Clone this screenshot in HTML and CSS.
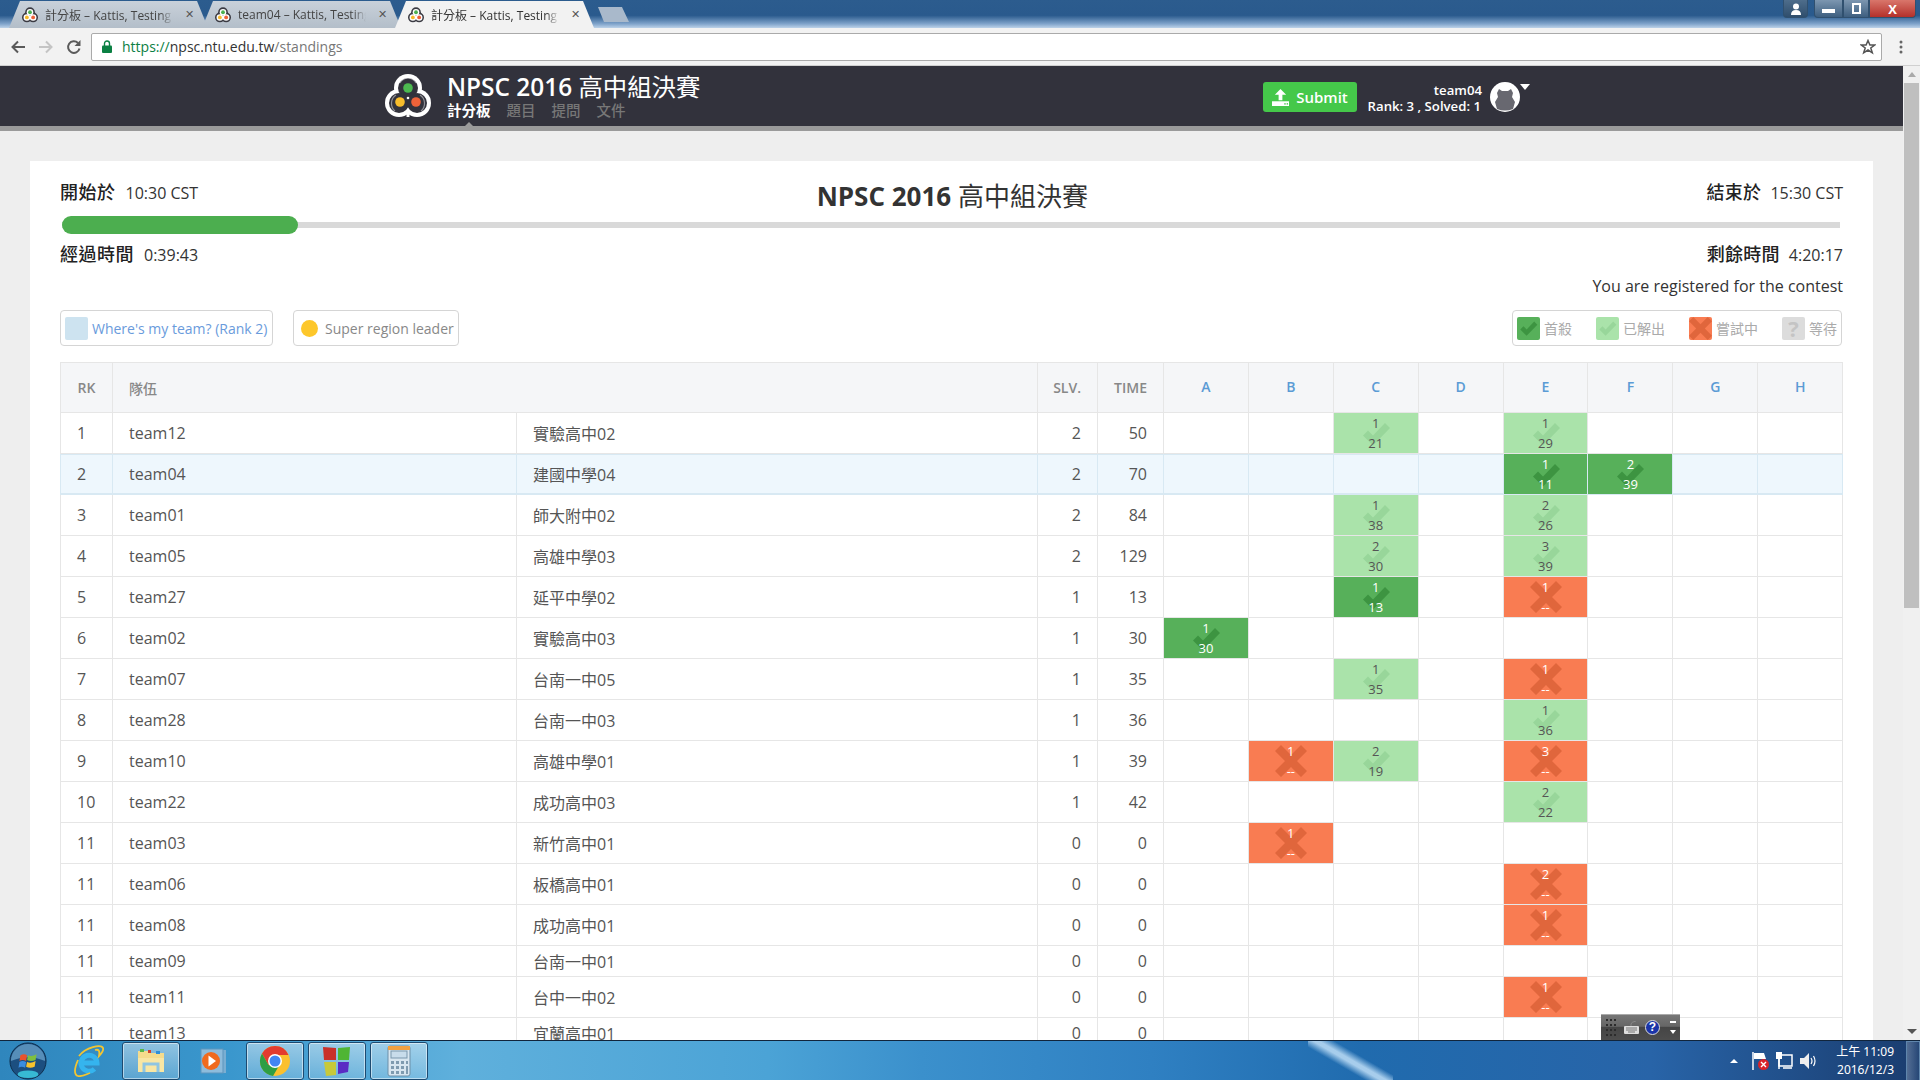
FILE: index.html
```html
<!DOCTYPE html>
<html lang="zh-Hant">
<head>
<meta charset="utf-8">
<title>計分板 – Kattis, Testing Contest</title>
<link rel="stylesheet" href="styles.css">
</head>
<body>
<svg class="defs" width="0" height="0">
  <symbol id="chk" viewBox="0 0 30 24"><path d="M2 13.5 L7 8.5 L12 13.5 L24 1 L29 6 L12 23.5 Z"/></symbol>
  <symbol id="cross" viewBox="0 0 32 32"><path d="M6 0 L16 10 L26 0 L32 6 L22 16 L32 26 L26 32 L16 22 L6 32 L0 26 L10 16 L0 6 Z"/></symbol>
  <symbol id="fav" viewBox="0 0 46 44"><g fill="#3a3a42"><circle cx="23" cy="14" r="14"/><circle cx="14" cy="29" r="14"/><circle cx="32" cy="29" r="14"/></g><g fill="#fff"><circle cx="23" cy="14" r="9.5"/><circle cx="14" cy="29" r="9.5"/><circle cx="32" cy="29" r="9.5"/></g><circle cx="23" cy="14" r="5.5" fill="#4cb050"/><circle cx="14" cy="29" r="5.5" fill="#f6b92b"/><circle cx="32" cy="29" r="5.5" fill="#ee6239"/></symbol>
</svg>
<div class="app">
  <div class="tabstrip">
    <div class="tab"><svg class="fav"><use href="#fav"/></svg><span class="tab-t">計分板 – Kattis, Testing</span><span class="tab-x">✕</span></div>
    <div class="tab"><svg class="fav"><use href="#fav"/></svg><span class="tab-t">team04 – Kattis, Testing</span><span class="tab-x">✕</span></div>
    <div class="tab active"><svg class="fav"><use href="#fav"/></svg><span class="tab-t">計分板 – Kattis, Testing</span><span class="tab-x">✕</span></div>
    <div class="newtab"></div>
    <div class="winbtns">
      <div class="wb wb-user"><svg width="12" height="12" viewBox="0 0 12 12"><circle cx="6" cy="3.5" r="3" fill="#fff"/><path d="M1 12 Q1 7 6 7 Q11 7 11 12Z" fill="#fff"/></svg></div>
      <div class="wb wb-min"><i></i></div>
      <div class="wb wb-max"><b></b></div>
      <div class="wb wb-close">X</div>
    </div>
  </div>
  <div class="toolbar">
    <svg class="tb-ic" viewBox="0 0 16 16"><path d="M15 8H3M8 2.5 2.5 8 8 13.5" fill="none" stroke="#5a5a5a" stroke-width="2"/></svg>
    <svg class="tb-ic" viewBox="0 0 16 16"><path d="M1 8H13M8 2.5 13.5 8 8 13.5" fill="none" stroke="#c4c4c4" stroke-width="2"/></svg>
    <svg class="tb-ic" viewBox="0 0 16 16"><path d="M13.5 9.5A5.8 5.8 0 1 1 12 4" fill="none" stroke="#5a5a5a" stroke-width="2"/><path d="M14.5 1V7H8.5Z" fill="#5a5a5a"/></svg>
    <div class="omni">
      <svg class="lock" viewBox="0 0 10 13"><path d="M2.5 6V3.5a2.5 2.5 0 0 1 5 0V6" fill="none" stroke="#0b8043" stroke-width="1.4"/><rect y="5.5" width="10" height="7.5" rx="1" fill="#0b8043"/></svg>
      <span class="url"><span class="u-s">https://</span><span class="u-h">npsc.ntu.edu.tw</span><span class="u-p">/standings</span></span>
      <svg class="star" viewBox="0 0 16 16"><path d="M8 1.5 9.9 6h4.8l-3.9 3 1.5 4.8L8 11l-4.3 2.8L5.2 9 1.3 6h4.8Z" fill="none" stroke="#555" stroke-width="1.5"/></svg>
    </div>
    <svg class="dots" viewBox="0 0 4 16"><circle cx="2" cy="3" r="1.5"/><circle cx="2" cy="8" r="1.5"/><circle cx="2" cy="13" r="1.5"/></svg>
  </div>

  <div class="viewport">
    <div class="page">
      <header class="hdr">
        <svg class="logo" viewBox="0 0 46 44">
          <g fill="#fff"><circle cx="23" cy="14" r="14"/><circle cx="14" cy="29" r="14"/><circle cx="32" cy="29" r="14"/></g>
          <g fill="#32323c"><circle cx="23" cy="14" r="10"/><circle cx="14" cy="29" r="10"/><circle cx="32" cy="29" r="10"/></g>
          <path d="M23 36V43" stroke="#fff" stroke-width="3"/>
          <path d="M11 21A10 10 0 0 0 10 37M35 21A10 10 0 0 1 36 37M15 9A9 9 0 0 1 31 9" fill="none" stroke="#fff" stroke-width="1.2" opacity=".45"/>
          <circle cx="23" cy="14" r="4.8" fill="#4cb950"/><circle cx="15" cy="28" r="4.8" fill="#f8bd2c"/><circle cx="31" cy="28" r="4.8" fill="#ee6239"/><circle cx="23" cy="24" r="1.3" fill="#fff"/>
        </svg>
        <div class="hdr-titles">
          <div class="hdr-title">NPSC 2016 <span class="cjk">高中組決賽</span></div>
          <nav class="nav"><span class="nav-i on">計分板</span><span class="nav-i">題目</span><span class="nav-i">提問</span><span class="nav-i">文件</span></nav>
        </div>
        <div class="spacer"></div>
        <div class="submit">
          <svg class="sub-ic" viewBox="0 0 18 18"><path d="M9 0 15 6H11V12H7V6H3Z" fill="#fff"/><path d="M0 13H18V18H0Z" fill="#fff"/><rect x="13" y="15" width="1.5" height="1.5" fill="#45c84a"/><rect x="15.5" y="15" width="1.5" height="1.5" fill="#45c84a"/></svg>
          <span>Submit</span>
        </div>
        <div class="user"><div>team04</div><div>Rank: 3 , Solved: 1</div></div>
        <svg class="avatar" viewBox="0 0 30 30"><circle cx="15" cy="15" r="15" fill="#fff"/><path d="M9 7 12 9H18L21 7 23 11 22 15 25 20 23 27Q15 30 7 27L5 20 8 15 7 11Z" fill="#686870"/></svg>
        <div class="caret"></div>
      </header>
      <div class="band"></div>
      <main class="wrap">
        <section class="card">
          <div class="info first">
            <div><span class="lbl">開始於</span><span class="val">10:30 CST</span></div>
            <h1 class="ctitle">NPSC 2016 <span class="cjk">高中組決賽</span></h1>
            <div class="right"><span class="lbl">結束於</span><span class="val">15:30 CST</span></div>
          </div>
          <div class="track"><div class="fill"></div></div>
          <div class="info second">
            <div><span class="lbl">經過時間</span><span class="val">0:39:43</span></div>
            <div class="right"><span class="lbl">剩餘時間</span><span class="val">4:20:17</span></div>
          </div>
          <div class="reg">You are registered for the contest</div>
          <div class="tools">
            <div class="pill mine"><span class="sw-mine"></span><span>Where's my team? (Rank 2)</span></div>
            <div class="pill leader"><span class="sw-dot"></span><span>Super region leader</span></div>
            <div class="spacer"></div>
            <div class="legend">
              <div class="lg"><span class="sw first-s"><svg class="sw-ic"><use href="#chk"/></svg></span>首殺</div>
              <div class="lg"><span class="sw ok-s"><svg class="sw-ic"><use href="#chk"/></svg></span>已解出</div>
              <div class="lg"><span class="sw try-s"><svg class="sw-ic"><use href="#cross"/></svg></span>嘗試中</div>
              <div class="lg"><span class="sw wait-s">?</span>等待</div>
            </div>
          </div>
          <table class="board">
            <colgroup><col class="c-rk"><col class="c-team"><col class="c-sch"><col class="c-slv"><col class="c-time"><col class="c-p"><col class="c-p"><col class="c-p"><col class="c-p"><col class="c-p"><col class="c-p"><col class="c-p"><col class="c-p"></colgroup>
            <thead><tr><th class="ctr">RK</th><th class="lft" colspan="2">隊伍</th><th class="rgt">SLV.</th><th class="rgt">TIME</th><th class="pr">A</th><th class="pr">B</th><th class="pr">C</th><th class="pr">D</th><th class="pr">E</th><th class="pr">F</th><th class="pr">G</th><th class="pr">H</th></tr></thead>
            <tbody>
              <tr><td class="rk">1</td><td class="tm">team12</td><td class="tm">實驗高中02</td><td class="num">2</td><td class="num">50</td><td class="p"></td><td class="p"></td><td class="p"><div class="cell ok"><svg class="mk"><use href="#chk"/></svg><div class="ct"><span>1</span><span>21</span></div></div></td><td class="p"></td><td class="p"><div class="cell ok"><svg class="mk"><use href="#chk"/></svg><div class="ct"><span>1</span><span>29</span></div></div></td><td class="p"></td><td class="p"></td><td class="p"></td></tr>
              <tr class="me"><td class="rk">2</td><td class="tm">team04</td><td class="tm">建國中學04</td><td class="num">2</td><td class="num">70</td><td class="p"></td><td class="p"></td><td class="p"></td><td class="p"></td><td class="p"><div class="cell fst"><svg class="mk"><use href="#chk"/></svg><div class="ct"><span>1</span><span>11</span></div></div></td><td class="p"><div class="cell fst"><svg class="mk"><use href="#chk"/></svg><div class="ct"><span>2</span><span>39</span></div></div></td><td class="p"></td><td class="p"></td></tr>
              <tr><td class="rk">3</td><td class="tm">team01</td><td class="tm">師大附中02</td><td class="num">2</td><td class="num">84</td><td class="p"></td><td class="p"></td><td class="p"><div class="cell ok"><svg class="mk"><use href="#chk"/></svg><div class="ct"><span>1</span><span>38</span></div></div></td><td class="p"></td><td class="p"><div class="cell ok"><svg class="mk"><use href="#chk"/></svg><div class="ct"><span>2</span><span>26</span></div></div></td><td class="p"></td><td class="p"></td><td class="p"></td></tr>
              <tr><td class="rk">4</td><td class="tm">team05</td><td class="tm">高雄中學03</td><td class="num">2</td><td class="num">129</td><td class="p"></td><td class="p"></td><td class="p"><div class="cell ok"><svg class="mk"><use href="#chk"/></svg><div class="ct"><span>2</span><span>30</span></div></div></td><td class="p"></td><td class="p"><div class="cell ok"><svg class="mk"><use href="#chk"/></svg><div class="ct"><span>3</span><span>39</span></div></div></td><td class="p"></td><td class="p"></td><td class="p"></td></tr>
              <tr><td class="rk">5</td><td class="tm">team27</td><td class="tm">延平中學02</td><td class="num">1</td><td class="num">13</td><td class="p"></td><td class="p"></td><td class="p"><div class="cell fst"><svg class="mk"><use href="#chk"/></svg><div class="ct"><span>1</span><span>13</span></div></div></td><td class="p"></td><td class="p"><div class="cell tr"><svg class="mk mx"><use href="#cross"/></svg><div class="ct"><span>1</span><span>--</span></div></div></td><td class="p"></td><td class="p"></td><td class="p"></td></tr>
              <tr><td class="rk">6</td><td class="tm">team02</td><td class="tm">實驗高中03</td><td class="num">1</td><td class="num">30</td><td class="p"><div class="cell fst"><svg class="mk"><use href="#chk"/></svg><div class="ct"><span>1</span><span>30</span></div></div></td><td class="p"></td><td class="p"></td><td class="p"></td><td class="p"></td><td class="p"></td><td class="p"></td><td class="p"></td></tr>
              <tr><td class="rk">7</td><td class="tm">team07</td><td class="tm">台南一中05</td><td class="num">1</td><td class="num">35</td><td class="p"></td><td class="p"></td><td class="p"><div class="cell ok"><svg class="mk"><use href="#chk"/></svg><div class="ct"><span>1</span><span>35</span></div></div></td><td class="p"></td><td class="p"><div class="cell tr"><svg class="mk mx"><use href="#cross"/></svg><div class="ct"><span>1</span><span>--</span></div></div></td><td class="p"></td><td class="p"></td><td class="p"></td></tr>
              <tr><td class="rk">8</td><td class="tm">team28</td><td class="tm">台南一中03</td><td class="num">1</td><td class="num">36</td><td class="p"></td><td class="p"></td><td class="p"></td><td class="p"></td><td class="p"><div class="cell ok"><svg class="mk"><use href="#chk"/></svg><div class="ct"><span>1</span><span>36</span></div></div></td><td class="p"></td><td class="p"></td><td class="p"></td></tr>
              <tr><td class="rk">9</td><td class="tm">team10</td><td class="tm">高雄中學01</td><td class="num">1</td><td class="num">39</td><td class="p"></td><td class="p"><div class="cell tr"><svg class="mk mx"><use href="#cross"/></svg><div class="ct"><span>1</span><span>--</span></div></div></td><td class="p"><div class="cell ok"><svg class="mk"><use href="#chk"/></svg><div class="ct"><span>2</span><span>19</span></div></div></td><td class="p"></td><td class="p"><div class="cell tr"><svg class="mk mx"><use href="#cross"/></svg><div class="ct"><span>3</span><span>--</span></div></div></td><td class="p"></td><td class="p"></td><td class="p"></td></tr>
              <tr><td class="rk">10</td><td class="tm">team22</td><td class="tm">成功高中03</td><td class="num">1</td><td class="num">42</td><td class="p"></td><td class="p"></td><td class="p"></td><td class="p"></td><td class="p"><div class="cell ok"><svg class="mk"><use href="#chk"/></svg><div class="ct"><span>2</span><span>22</span></div></div></td><td class="p"></td><td class="p"></td><td class="p"></td></tr>
              <tr><td class="rk">11</td><td class="tm">team03</td><td class="tm">新竹高中01</td><td class="num">0</td><td class="num">0</td><td class="p"></td><td class="p"><div class="cell tr"><svg class="mk mx"><use href="#cross"/></svg><div class="ct"><span>1</span><span>--</span></div></div></td><td class="p"></td><td class="p"></td><td class="p"></td><td class="p"></td><td class="p"></td><td class="p"></td></tr>
              <tr><td class="rk">11</td><td class="tm">team06</td><td class="tm">板橋高中01</td><td class="num">0</td><td class="num">0</td><td class="p"></td><td class="p"></td><td class="p"></td><td class="p"></td><td class="p"><div class="cell tr"><svg class="mk mx"><use href="#cross"/></svg><div class="ct"><span>2</span><span>--</span></div></div></td><td class="p"></td><td class="p"></td><td class="p"></td></tr>
              <tr><td class="rk">11</td><td class="tm">team08</td><td class="tm">成功高中01</td><td class="num">0</td><td class="num">0</td><td class="p"></td><td class="p"></td><td class="p"></td><td class="p"></td><td class="p"><div class="cell tr"><svg class="mk mx"><use href="#cross"/></svg><div class="ct"><span>1</span><span>--</span></div></div></td><td class="p"></td><td class="p"></td><td class="p"></td></tr>
              <tr class="short"><td class="rk">11</td><td class="tm">team09</td><td class="tm">台南一中01</td><td class="num">0</td><td class="num">0</td><td class="p"></td><td class="p"></td><td class="p"></td><td class="p"></td><td class="p"></td><td class="p"></td><td class="p"></td><td class="p"></td></tr>
              <tr><td class="rk">11</td><td class="tm">team11</td><td class="tm">台中一中02</td><td class="num">0</td><td class="num">0</td><td class="p"></td><td class="p"></td><td class="p"></td><td class="p"></td><td class="p"><div class="cell tr"><svg class="mk mx"><use href="#cross"/></svg><div class="ct"><span>1</span><span>--</span></div></div></td><td class="p"></td><td class="p"></td><td class="p"></td></tr>
              <tr class="short"><td class="rk">11</td><td class="tm">team13</td><td class="tm">宜蘭高中01</td><td class="num">0</td><td class="num">0</td><td class="p"></td><td class="p"></td><td class="p"></td><td class="p"></td><td class="p"></td><td class="p"></td><td class="p"></td><td class="p"></td></tr>
            </tbody>
          </table>
        </section>
      </main>
    </div>
    <div class="sbar">
      <div class="sb-end"><i class="ar-up"></i></div>
      <div class="thumb"></div>
      <div class="spacer"></div>
      <div class="sb-end"><i class="ar-dn"></i></div>
    </div>
  </div>

  <div class="osk">
    <svg width="14" height="20" viewBox="0 0 14 20" class="osk-dots"><g fill="#2c2c2c"><rect x="1" y="1" width="2" height="2"/><rect x="5" y="1" width="2" height="2"/><rect x="9" y="1" width="2" height="2"/><rect x="1" y="6" width="2" height="2"/><rect x="5" y="6" width="2" height="2"/><rect x="9" y="6" width="2" height="2"/><rect x="1" y="11" width="2" height="2"/><rect x="5" y="11" width="2" height="2"/><rect x="9" y="11" width="2" height="2"/><rect x="1" y="16" width="2" height="2"/><rect x="5" y="16" width="2" height="2"/><rect x="9" y="16" width="2" height="2"/></g></svg>
    <svg width="16" height="14" viewBox="0 0 16 14"><rect y="5" width="15" height="8" rx="1" fill="#ddd"/><path d="M7 5V3Q7 1 12 0" stroke="#888" fill="none"/><path d="M2 7h11M2 9h11M4 11h7" stroke="#777"/></svg>
    <div class="osk-q">?</div>
    <div class="osk-ctl"><i></i><b></b></div>
  </div>

  <footer class="taskbar">
    <div class="streak"></div>
    <svg class="orb" viewBox="0 0 40 40">
      <circle cx="20" cy="20" r="19" fill="#1c4f80" stroke="#0d2b4a"/><path d="M2 20A18 18 0 0 1 38 20Q20 12 2 20Z" fill="#6fa9d1" opacity=".7"/><ellipse cx="20" cy="34" rx="11" ry="4" fill="#3fd3e8" opacity=".8"/>
      <path d="M12 14Q16 12 19 14L18 20Q14 18 11 20Z" fill="#e9532d"/><path d="M20 14Q24 16 29 13L28 19Q23 21 19 19Z" fill="#7fbf3f"/><path d="M11 21Q14 19 18 21L17 27Q13 25 10 27Z" fill="#3b8de0"/><path d="M19 21Q23 23 28 20L27 26Q22 28 18 26Z" fill="#f7c22d"/>
    </svg>
    <div class="tk"><svg class="tk-ic" viewBox="0 0 32 32"><path d="M8 18H24A8 8 0 1 0 21.5 24" fill="none" stroke="#35b4ee" stroke-width="5"/><path d="M6 11C13 2 28 -1 30 3C31 6 28 9 26 11C27 6 26 4 22 5M5 15C1 24 1 30 5 31C9 32 14 29 17 28" fill="none" stroke="#f3c531" stroke-width="1.8"/></svg></div>
    <div class="tk on"><svg class="tk-ic" viewBox="0 0 32 32"><path d="M3 6H14L16 8H29V26H3Z" fill="#f5dc8c"/><rect x="5" y="4" width="4" height="3" fill="#58b548"/><rect x="13" y="5" width="3" height="3" fill="#d0412e"/><rect x="21" y="6" width="4" height="3" fill="#2f8fd8"/><path d="M3 13H29V27H3Z" fill="#f8e6a4"/><path d="M9 27V19H23V27" fill="none" stroke="#8fc5e2" stroke-width="3"/></svg></div>
    <div class="tk"><svg class="tk-ic" viewBox="0 0 32 32"><rect x="7" y="5" width="22" height="23" fill="#7aaed2"/><rect x="4" y="4" width="22" height="24" fill="#8dbcdc" stroke="#5d95bd"/><circle cx="14" cy="16" r="9" fill="#f06a1e"/><path d="M11.5 10.5 19 16 11.5 21.5Z" fill="#fff"/></svg></div>
    <div class="tk on"><svg class="tk-ic big" viewBox="0 0 32 32"><circle cx="16" cy="16" r="15" fill="#fbc02d"/><path d="M16 1A15 15 0 0 0 3 8.5L9.5 20 16 10H29.5A15 15 0 0 0 16 1Z" fill="#e33b2e"/><path d="M3 8.5A15 15 0 0 0 14 31L20.5 20 9.5 20Z" fill="#2f9e44"/><circle cx="16" cy="16" r="7" fill="#fff"/><circle cx="16" cy="16" r="5.5" fill="#4285f4"/></svg></div>
    <div class="tk on"><svg class="tk-ic big" viewBox="0 0 32 32"><path d="M2 2 15 3V15L3 15Z" fill="#c9302a"/><path d="M17 3 29 2 28 15H17Z" fill="#4fb534"/><path d="M3 17H15V30L5 31Z" fill="#c7c93a"/><path d="M17 17H28L27 27 17 29Z" fill="#5a2bc4"/></svg></div>
    <div class="tk on"><svg class="tk-ic big" viewBox="0 0 32 32"><rect x="5" y="1" width="22" height="30" rx="2" fill="#d8e6f0" stroke="#6d8fa8"/><rect x="5" y="1" width="22" height="4" fill="#f0a040"/><rect x="8" y="6" width="16" height="7" fill="#c8dceb" stroke="#7a97ad"/><path d="M8 16h3v3H8zM13 16h3v3h-3zM18 16h3v3h-3zM23 16h2v3h-2zM8 21h3v3H8zM13 21h3v3h-3zM18 21h3v3h-3zM23 21h2v8h-2zM8 26h3v3H8zM13 26h3v3h-3zM18 26h3v3h-3z" fill="#7f9bb0"/></svg></div>
    <div class="spacer"></div>
    <div class="tray">
      <i class="tr-up"></i>
      <svg class="tr-ic" viewBox="0 0 18 20"><path d="M2 1V19" stroke="#fff" stroke-width="1.5"/><path d="M3 2H13L15 8H3Z" fill="#fff"/><circle cx="12.5" cy="13.5" r="5.5" fill="#d8232a"/><path d="M10 11 15 16M15 11 10 16" stroke="#fff" stroke-width="1.4"/></svg>
      <svg class="tr-ic" viewBox="0 0 18 20"><rect x="4" y="4" width="13" height="11" fill="none" stroke="#fff" stroke-width="1.5"/><path d="M1 1H7V8H1Z" fill="#fff"/><path d="M4 8V18M8 17H17" stroke="#fff" stroke-width="1.5"/></svg>
      <svg class="tr-ic" viewBox="0 0 18 20"><path d="M1 7H5L10 2V18L5 13H1Z" fill="#eee"/><path d="M12 7Q14 10 12 13M14.5 5Q17.5 10 14.5 15" fill="none" stroke="#fff" stroke-width="1.2"/></svg>
    </div>
    <div class="clock"><div>上午 11:09</div><div>2016/12/3</div></div>
    <div class="showdesk"></div>
  </footer>
</div>
</body>
</html>
```
FILE: styles.css
```css
* { box-sizing: border-box; }
html, body { margin: 0; height: 100%; overflow: hidden; }
body { font-family: "Open Sans", "Noto Sans CJK TC", sans-serif; color: #555; font-size: 16px; }
.defs { display: block; height: 0; }
.spacer { flex: 1; }
.app { position: relative; height: 1080px; width: 1920px; display: flex; flex-direction: column; overflow: hidden; }

/* window frame + tabs */
.tabstrip { height: 28px; display: flex; align-items: flex-end; padding-left: 9px; flex: none;
  background: linear-gradient(180deg, #2c5c8e 0%, #2a5a8d 55%, #7fa3ca 85%, #bcd2e9 100%); position: relative; }
.tab { width: 199px; height: 27px; margin-right: -6px; display: flex; align-items: center; padding-left: 13px;
  background: linear-gradient(180deg, #c9d1da, #b3bec9);
  clip-path: polygon(11px 0, 188px 0, 199px 100%, 0 100%); font-size: 12px; color: #444; flex: none; }
.tab.active { background: #f2f2f2; position: relative; z-index: 1; color: #333; }
.fav { width: 16px; height: 16px; flex: none; }
.tab-t { margin-left: 7px; width: 128px; white-space: nowrap; overflow: hidden; flex: none;
  -webkit-mask-image: linear-gradient(90deg, #000 90%, transparent); mask-image: linear-gradient(90deg, #000 90%, transparent); }
.tab-x { margin-left: 12px; font-size: 11px; color: #555; font-family: "DejaVu Sans", sans-serif; }
.newtab { width: 31px; height: 15px; margin: 0 0 6px 10px; background: #a9b9cb; clip-path: polygon(0 0, 24px 0, 100% 100%, 6px 100%); flex: none; }
.winbtns { position: absolute; top: 0; right: 4px; display: flex; }
.wb { height: 18px; border: 1px solid #30506f; border-top: 0; display: flex; align-items: center; justify-content: center; background: linear-gradient(180deg, #7c96b0, #3e5f80); }
.wb-user { width: 25px; margin-right: 6px; border-radius: 0 0 4px 4px; background: linear-gradient(180deg, #4e6d8b, #2f4e6d); }
.wb-min { width: 29px; border-radius: 0 0 0 4px; }
.wb-min i { width: 13px; height: 4px; background: #fff; margin-top: 4px; }
.wb-max { width: 26px; }
.wb-max b { width: 9px; height: 11px; border: 2px solid #fff; }
.wb-close { width: 47px; background: linear-gradient(180deg, #d9766b, #b4302a); color: #fff; font-size: 13px; font-weight: 700; border-radius: 0 0 4px 0; }

/* toolbar */
.toolbar { height: 38px; flex: none; background: #f2f2f2; display: flex; align-items: center; padding: 0 10px 0 10px; border-bottom: 1px solid #d0d0d0; }
.tb-ic { width: 16px; height: 16px; margin-right: 12px; flex: none; }
.omni { margin-left: -3px; width: 1791px; height: 28px; background: #fff; border: 1px solid #aaa; border-radius: 2px; display: flex; align-items: center; padding-left: 10px; flex: none; }
.lock { width: 10px; height: 13px; margin-right: 10px; flex: none; }
.url { font-size: 14px; }
.u-s { color: #0b8043; }
.u-h { color: #333; }
.u-p { color: #777; }
.star { width: 16px; height: 16px; margin-left: auto; margin-right: 5px; }
.dots { width: 4px; height: 16px; margin-left: 17px; fill: #666; flex: none; }

/* viewport */
.viewport { flex: 1; display: flex; min-height: 0; }
.page { flex: 1; overflow: hidden; background: #eeeeee; min-width: 0; }
.hdr { position: relative; height: 60px; background: #32323c; display: flex; align-items: center; padding: 0 383px 0 385px; }
.logo { width: 46px; height: 44px; flex: none; }
.hdr-titles { margin-left: 16px; display: flex; flex-direction: column; padding-bottom: 2px; }
.hdr-title { font-size: 24.4px; font-weight: 600; line-height: 30px; color: #fff; white-space: nowrap; }
.cjk { font-weight: 400; }
.nav { display: flex; gap: 16px; font-size: 14.5px; line-height: 18px; margin-bottom: -2px; color: #777; font-weight: 500; }
.nav-i.on { color: #fff; font-weight: 700; position: relative; }
.nav-i.on::after { content: ""; position: absolute; left: 16px; bottom: -8px; border: 6px solid transparent; border-top: 0; border-bottom: 6px solid #9a9a9a; }
.submit { width: 94px; height: 30px; margin-top: 2px; background: #45c84a; border-radius: 3px; display: flex; align-items: center; justify-content: center; gap: 7px; color: #fff; font-size: 15px; font-weight: 600; }
.sub-ic { width: 17px; height: 17px; }
.user { margin-left: 9px; margin-top: 4px; width: 115px; text-align: right; color: #fff; font-size: 13.2px; font-weight: 600; line-height: 16px; white-space: nowrap; }
.user div:first-child { margin-right: -1px; }
.avatar { width: 30px; height: 30px; margin-left: 9px; margin-top: 2px; flex: none; }
.caret { position: absolute; right: 373px; top: 18px; width: 0; height: 0; border: 5px solid transparent; border-bottom: 0; border-top: 6px solid #fff; }
.band { height: 5px; background: #9a9a9a; }
.wrap { padding: 30px 30px 0; }
.card { width: 1843px; background: #fff; padding: 19px 31px 0 30px; }

.info { display: flex; justify-content: space-between; align-items: center; line-height: 24px; color: #333; }
.info.first { height: 24px; position: relative; }
.lbl { font-size: 18px; font-weight: 500; margin-right: 10px; color: #222; letter-spacing: .5px; }
.right { margin-right: -1px; }
.right .lbl { margin-right: 9px; letter-spacing: .3px; }
.val { font-size: 16px; }
.ctitle { margin: 8px 0 0; font-size: 26px; font-weight: 700; line-height: 32px; color: #333; }
.track { margin-top: 12px; height: 18px; display: flex; align-items: center; margin-left: 2px; margin-right: 2px; background: linear-gradient(#d9d9d9, #d9d9d9) center / 100% 6px no-repeat; border-radius: 3px; }
.fill { width: 236px; height: 18px; background: #4cae4f; border-radius: 9px; }
.info.second { margin-top: 8px; }
.reg { margin-top: 7px; margin-right: -1px; text-align: right; line-height: 24px; color: #333; }

.tools { display: flex; gap: 20px; margin-top: 12px; height: 36px; }
.pill { display: flex; align-items: center; border: 1px solid #d5d5d5; border-radius: 4px; font-size: 14px; height: 36px; white-space: nowrap; }
.mine { width: 213px; padding-left: 4px; gap: 4px; color: #6a9bdc; }
.sw-mine { width: 23px; height: 23px; background: #cde3f0; border-radius: 2px; }
.leader { width: 166px; padding-left: 7px; gap: 7px; color: #888; }
.sw-dot { width: 17px; height: 17px; border-radius: 50%; background: #fdc72b; }
.legend { display: flex; align-items: center; gap: 24px; border: 1px solid #d5d5d5; border-radius: 4px; height: 36px; padding: 0 4px; font-size: 14px; color: #aaa; }
.lg { display: flex; align-items: center; gap: 4px; white-space: nowrap; }
.sw { width: 23px; height: 23px; border-radius: 2px; display: flex; align-items: center; justify-content: center; }
.sw-ic { width: 19px; height: 19px; }
.first-s { background: #57b05a; fill: #3d9441; }
.ok-s { background: #aae3aa; fill: #98d69a; }
.try-s { background: #f97c52; fill: #e0663c; }
.try-s .sw-ic { width: 23px; height: 23px; }
.wait-s { background: #dcdcdc; color: #c4c4c4; font-size: 22px; font-weight: 700; }

/* table */
.board { margin-top: 16px; width: 1782px; table-layout: fixed; border-collapse: collapse; font-size: 16px; }
.c-rk { width: 52px; }
.c-team { width: 404px; }
.c-sch { width: 521px; }
.c-slv { width: 60px; }
.c-time { width: 66px; }
.c-p { width: 84.9px; }
.board th, .board td { border: 1px solid #e6e6e6; padding: 0; }
.board th { height: 50px; background: #f5f6f8; font-size: 14px; font-weight: 600; color: #888; }
.board th.lft { text-align: left; padding-left: 16px; font-size: 14px; font-weight: 500; }
.board th.rgt { text-align: right; padding-right: 16px; }
.board th.pr { color: #5b9bd5; padding-bottom: 3px; }
.board td { height: 41px; color: #555; }
.board tr.short td { height: 31px; }
.board .rk { padding-left: 16px; }
.board .tm { padding-left: 16px; white-space: nowrap; }
.board .num { text-align: right; padding-right: 16px; }
.me td { background: #eef7fd; border-color: #d8e9f3; box-shadow: inset 0 1px 0 #d8e9f3, inset 0 -1px 0 #d8e9f3; }
.cell { display: grid; height: 40px; width: 100%; place-items: center; font-size: 13px; line-height: 15px; }
.cell > * { grid-area: 1 / 1; }
.mk { width: 30px; height: 24px; margin-top: 1px; }
.mx { width: 32px; height: 32px; margin-top: 0; }
.ct { width: 100%; height: 100%; display: flex; flex-direction: column; align-items: center; justify-content: space-between; padding: 3px 0 2px; position: relative; }
.ok { background: #aae3aa; fill: #98d69a; color: #555; }
.fst { background: #57b05a; fill: #3d9441; color: #fff; }
.tr { background: #f97c52; fill: #e0663c; color: #fff; }

/* scrollbar */
.sbar { width: 17px; flex: none; background: #f0f0f0; display: flex; flex-direction: column; align-items: center; }
.sb-end { height: 17px; display: flex; align-items: center; justify-content: center; }
.ar-up { border: 4px solid transparent; border-top: 0; border-bottom: 5px solid #aaa; }
.ar-dn { border: 5px solid transparent; border-bottom: 0; border-top: 5px solid #555; }
.thumb { width: 15px; height: 525px; background: #bfbfbf; }

/* on-screen keyboard gadget */
.osk { position: absolute; left: 1601px; top: 1014px; width: 79px; height: 26px; display: flex; align-items: center; gap: 5px; padding-left: 4px;
  background: linear-gradient(180deg, #777 0%, #666 45%, #454545 50%, #4d4d4d 100%); border-top: 1px solid #aaa; }
.osk-q { width: 15px; height: 15px; border-radius: 50%; background: #1b34a8; color: #fff; font: 700 12px/13px "Liberation Sans", sans-serif; text-align: center; border: 1px solid #ddd; flex: none; }
.osk-ctl { display: flex; flex-direction: column; gap: 7px; margin-left: 5px; align-items: center; }
.osk-ctl i { width: 6px; height: 2px; background: #fff; }
.osk-ctl b { border: 3px solid transparent; border-bottom: 0; border-top: 4px solid #fff; }

/* taskbar */
.taskbar { position: relative; height: 40px; flex: none; display: flex; align-items: center; gap: 4px; overflow: hidden;
  border-top: 1px solid #11253c; color: #fff;
  background: linear-gradient(90deg, #2f86bd 0%, #3a97cd 12%, #5fb0dc 24%, #4ba3d6 40%, #3b90cc 48%, #2f80c2 60%, #206bae 71%, #2864a8 86%, #1a3c6e 100%); }
.streak { position: absolute; left: 1308px; top: 0; width: 85px; height: 40px;
  background: linear-gradient(30deg, transparent 38%, #a7cdec 48%, #a7cdec 52%, transparent 62%); }
.orb { width: 38px; height: 38px; margin: 0 9px; flex: none; position: relative; }
.tk { width: 58px; height: 38px; display: flex; align-items: center; justify-content: center; border-radius: 3px; position: relative; flex: none; }
.tk.on { border: 1px solid #1d4a70; background: linear-gradient(180deg, rgba(255,255,255,.45), rgba(255,255,255,.18)); box-shadow: inset 0 0 0 1px rgba(255,255,255,.5); }
.tk-ic { width: 32px; height: 32px; }
.tray { display: flex; align-items: center; gap: 6px; position: relative; }
.tr-up { border: 4px solid transparent; border-top: 0; border-bottom: 4px solid #fff; margin-right: 7px; }
.tr-ic { width: 18px; height: 20px; }
.clock { width: 70px; margin-left: 3px; margin-right: 12px; text-align: right; font-size: 12px; line-height: 18px; position: relative; white-space: nowrap; font-family: "Noto Sans", "Noto Sans CJK TC", sans-serif; }
.showdesk { width: 14px; height: 40px; border: 1px solid #5f86ad; background: linear-gradient(90deg, rgba(255,255,255,.25), rgba(255,255,255,.05)); position: relative; flex: none; margin-left: -4px; }
```
